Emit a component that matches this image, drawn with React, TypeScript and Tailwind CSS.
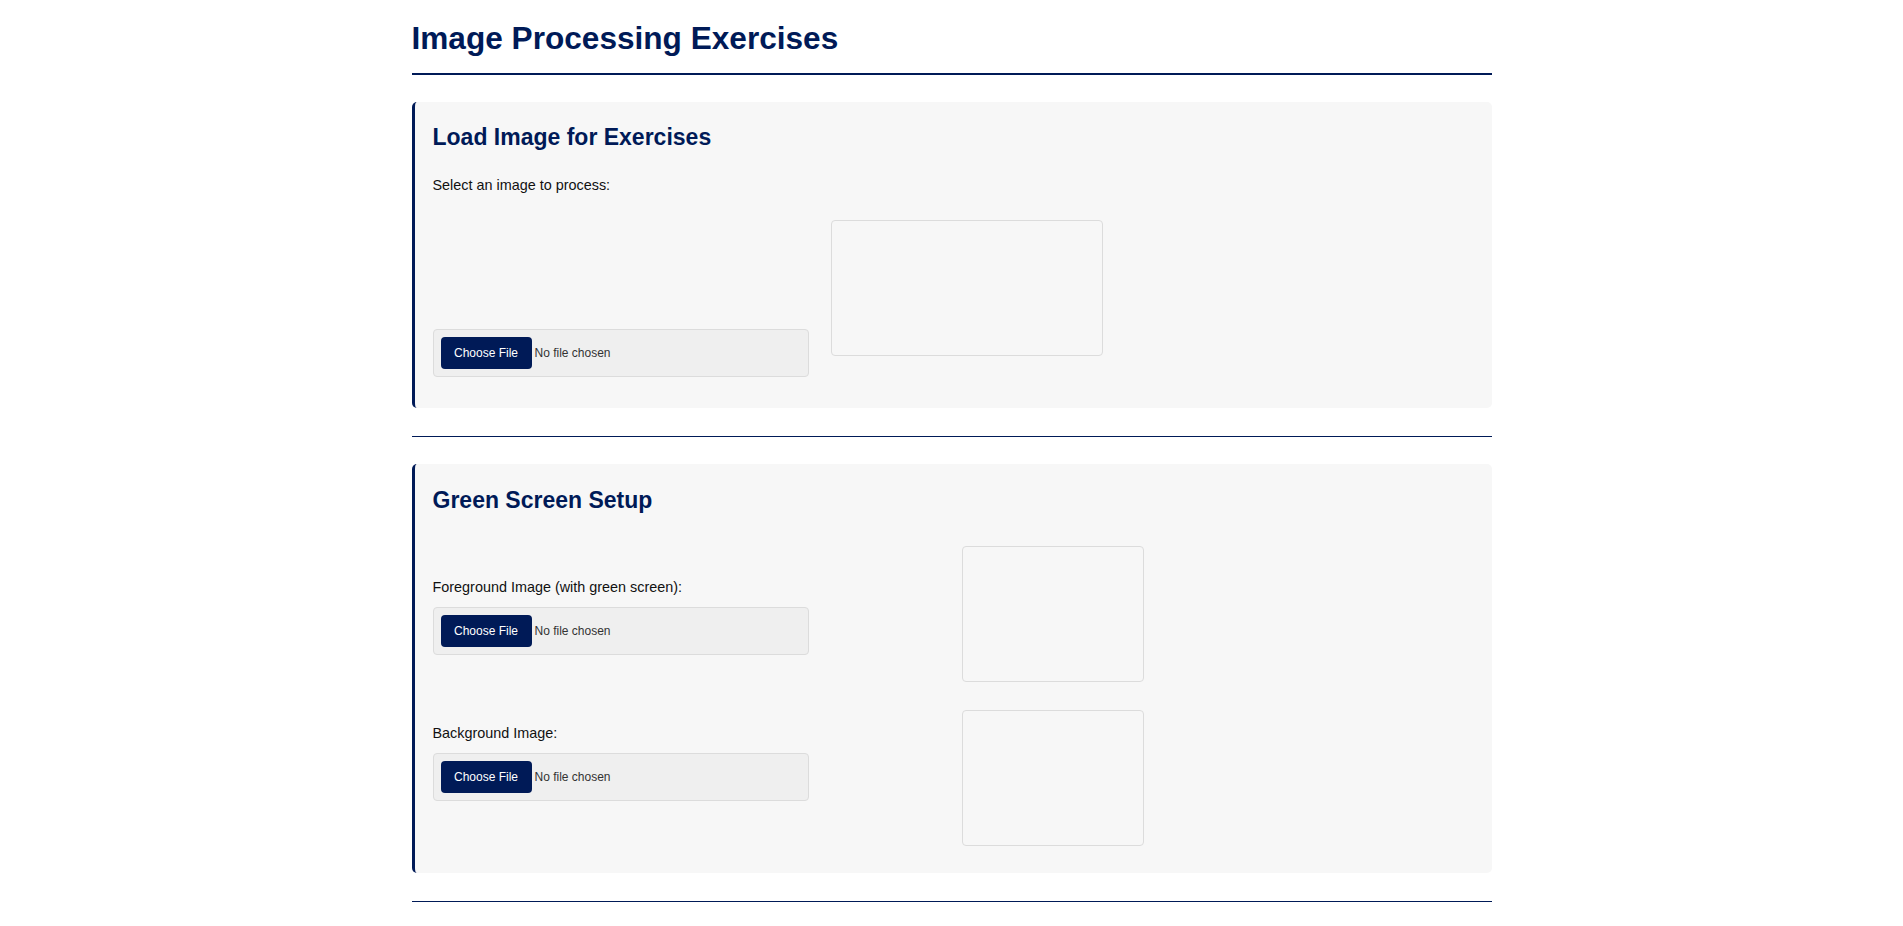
import React from "react";

const FileField = ({ id }: { id: string }) => (
  <label
    htmlFor={id}
    className="flex h-[48px] w-[376px] items-center rounded-[4px] border border-[#dcdcdc] bg-[#efefef] px-[7px] cursor-pointer"
  >
    <input id={id} type="file" accept="image/*" className="hidden" />
    <span className="flex h-[32px] w-[91px] items-center justify-center rounded-[4px] bg-[#001a57] text-[12px] text-white">
      Choose File
    </span>
    <span className="ml-[3px] text-[12px] text-[#333]">No file chosen</span>
  </label>
);

const Preview = ({ w }: { w: string }) => (
  <div className={`${w} h-[136px] rounded-[4px] border border-[#dcdcdc]`}></div>
);

export default function App() {
  return (
    <div className="min-h-screen bg-white font-['Liberation_Sans',Arial,sans-serif] text-[#111]">
      <div className="mx-auto w-[1080px] pt-5 pb-10">
        <h1 className="border-b-2 border-[#001a57] pb-[17px] text-[31.6px] font-bold leading-[36px] text-[#001a57]">
          Image Processing Exercises
        </h1>

        {/* load image */}
        <section className="mt-[27px] rounded-[5px] border-l-[3px] border-[#001a57] bg-[#f7f7f7] px-[18px] pt-[21px] pb-[31px]">
          <h2 className="text-[23px] font-bold leading-[28px] text-[#001a57]">Load Image for Exercises</h2>
          <p className="mt-[26px] text-[14.4px] leading-[17px]">Select an image to process:</p>
          <div className="mt-[26px] flex items-end gap-[22px]">
            <FileField id="main-image" />
            <div className="mb-[21px]">
              <Preview w="w-[272px]" />
            </div>
          </div>
        </section>

        <hr className="mt-[28px] h-px border-0 bg-[#001a57]" />

        {/* green screen */}
        <section className="mt-[27px] rounded-[5px] border-l-[3px] border-[#001a57] bg-[#f7f7f7] px-[18px] pt-[22px] pb-[27px]">
          <h2 className="text-[23px] font-bold leading-[28px] text-[#001a57]">Green Screen Setup</h2>
          <div className="grid grid-cols-2 gap-x-[18px]">
            <div>
              <p className="mt-[65px] text-[14.4px] leading-[17px]">Foreground Image (with green screen):</p>
              <div className="mt-[11px]">
                <FileField id="fg-image" />
              </div>
              <p className="mt-[70px] text-[14.4px] leading-[17px]">Background Image:</p>
              <div className="mt-[11px]">
                <FileField id="bg-image" />
              </div>
            </div>
            <div className="mt-[32px] flex flex-col gap-[28px]">
              <Preview w="w-[182px]" />
              <Preview w="w-[182px]" />
            </div>
          </div>
        </section>

        <hr className="mt-[28px] h-px border-0 bg-[#001a57]" />
      </div>
    </div>
  );
}
